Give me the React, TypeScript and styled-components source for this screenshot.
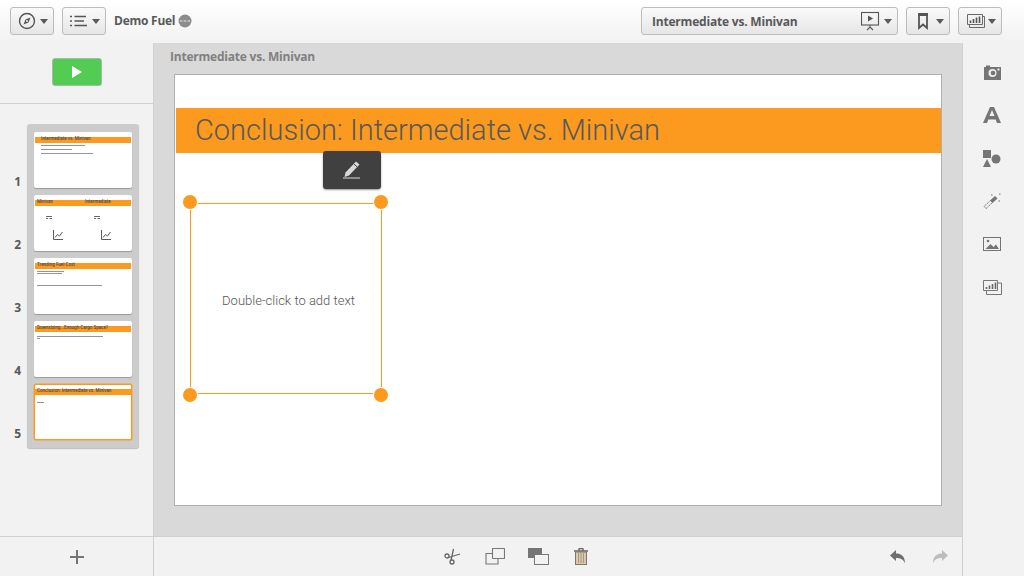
import React from "react";
import styled, { createGlobalStyle } from "styled-components";

const Global = createGlobalStyle`
  html, body { margin: 0; padding: 0; height: 100%; }
  body { font-family: Roboto, "Liberation Sans", sans-serif; color: #595959; overflow: hidden; }
`;
const Page = styled.div`width: 1024px; height: 576px; display: flex; flex-direction: column; background: #f2f2f2;`;
const TopBar = styled.header`
  height: 43px; flex: none; display: flex; align-items: flex-start; box-sizing: border-box; padding: 7px 22px 0 10px;
  background: linear-gradient(#ffffff, #f2f2f2);
`;
const ToolButton = styled.button<{ $w?: number; $ml?: number; $pl?: number }>`
  width: ${p => p.$w ?? 44}px; height: 28px; box-sizing: border-box; margin: 0 0 0 ${p => p.$ml ?? 0}px; padding: 0 5px 0 ${p => p.$pl ?? 7}px;
  display: flex; align-items: center; justify-content: space-between; flex: none;
  border: 1px solid #bcbcbc; border-radius: 3px; background: linear-gradient(#fafafa, #e6e6e6); color: #595959;
`;
const Caret = styled.span`width: 0; height: 0; border-left: 4px solid transparent; border-right: 4px solid transparent; border-top: 5px solid #595959; margin-top: 1px; flex: none;`;
const AppName = styled.div`margin-left: 8px; height: 27px; display: flex; align-items: center; gap: 3px; font: 700 12px "Open Sans", sans-serif; color: #595959; letter-spacing: -0.25px;`;
const Spacer = styled.div`flex: 1;`;
const SheetLabel = styled.span`font: 700 12px "Open Sans", sans-serif; color: #595959; letter-spacing: -0.2px;`;
const SheetRight = styled.span`display: flex; align-items: center; gap: 4px;`;
const Main = styled.div`flex: 1; display: flex; min-height: 0;`;
const LeftColumn = styled.aside`width: 154px; flex: none; display: flex; flex-direction: column; box-sizing: border-box; border-right: 1px solid #d0d0d0;`;
const PlayArea = styled.div`height: 61px; flex: none; box-sizing: border-box; border-bottom: 1px solid #d0d0d0; padding: 15px 0 0 52px;`;
const PlayButton = styled.button`
  width: 50px; height: 28px; margin: 0; padding: 0; border: 1px solid #a9b8a9; border-radius: 3px; background: #52cc52;
  display: flex; align-items: center; justify-content: center;
`;
const ThumbArea = styled.div`flex: 1; padding: 20px 0 0 0; display: flex; min-height: 0;`;
const Numbers = styled.div`width: 27px; flex: none; box-sizing: border-box; padding: 9px 6px 0 0; display: flex; flex-direction: column; gap: 7px;`;
const NumberCell = styled.div`height: 56px; display: flex; align-items: flex-end; justify-content: flex-end; font: 700 12px "Open Sans", sans-serif; color: #595959; line-height: 14px;`;
const Tray = styled.div`width: 112px; height: 324px; box-sizing: border-box; padding: 8px 7px; display: flex; flex-direction: column; gap: 7px; background: #cccccc; border-radius: 3px; box-shadow: 0 1px 1px #bbb;`;
const Thumb = styled.div<{ $active?: boolean }>`
  width: 98px; height: 56px; flex: none; box-sizing: border-box; position: relative; overflow: hidden; background: #fff; border-radius: 2px;
  box-shadow: 0 1px 1px #999; ${p => p.$active ? "border: 1px solid #fb9a1e; box-shadow: 0 0 0 .5px #fb9a1e;" : ""}
`;
const ThumbBanner = styled.div<{ $active?: boolean }>`
  position: absolute; left: 1px; right: 1px; top: 5px; height: 6px; background: #fb9a1e; ${p => p.$active ? "left: 0; right: 0; top: 4px;" : ""}
`;
const ThumbTitle = styled.span<{ $x: number; $top?: number }>`
  position: absolute; left: ${p => p.$x}px; top: ${p => p.$top ?? 3}px; font: 500 4.5px/7px Roboto, sans-serif; color: #4a4a4a; white-space: nowrap;
`;
const ThumbLine = styled.div<{ $x: number; $y: number; $w: number }>`
  position: absolute; left: ${p => p.$x}px; top: ${p => p.$y}px; width: ${p => p.$w}px; height: 1px; background: #98929e;
`;
const ThumbIcon = styled.svg<{ $x: number; $y: number }>`position: absolute; left: ${p => p.$x}px; top: ${p => p.$y}px;`;
const AddBar = styled.div`height: 40px; flex: none; box-sizing: border-box; border-top: 1px solid #d0d0d0; display: flex; align-items: center; justify-content: center; color: #757575;`;
const Center = styled.main`flex: 1; display: flex; flex-direction: column; min-width: 0;`;
const Stage = styled.div`flex: 1; background: #d9d9d9; box-sizing: border-box; padding: 0 20px 30px 20px; display: flex; flex-direction: column; min-height: 0;`;
const StageTitle = styled.div`height: 31px; flex: none; box-sizing: border-box; padding: 6px 0 0 0; margin-left: -4px; font: 700 12px/16px "Open Sans", sans-serif; color: #808080; letter-spacing: -0.22px;`;
const Slide = styled.div`flex: 1; position: relative; background: #fff; border: 1px solid #b0b0b0; box-sizing: border-box;`;
const Banner = styled.div`
  position: absolute; left: 1px; right: 0; top: 33px; height: 45px; background: #fb9a1e; box-sizing: border-box; padding-left: 19px;
  font: 300 29px/44px Roboto, sans-serif; color: #595959; white-space: nowrap;
`;
const EditButton = styled.button`
  position: absolute; left: 148px; top: 76px; width: 58px; height: 38px; padding: 0; border: 0; border-radius: 3px; background: #404040;
  box-shadow: 0 1px 2px rgba(0,0,0,.4); display: flex; align-items: center; justify-content: center;
`;
const TextFrame = styled.div`
  position: absolute; left: 15px; top: 128px; width: 192px; height: 191px; box-sizing: border-box; border: 1px solid #fb9a1e;
  display: flex; align-items: center; justify-content: center; font: 300 13px Roboto, sans-serif; color: #555; padding: 4px 0 0 5px;
`;
const Handle = styled.span<{ $h: string; $v: string }>`
  position: absolute; width: 14px; height: 14px; border-radius: 50%; background: #fb9a1e; box-shadow: 0 0 0 1px #fff; ${p => p.$h}; ${p => p.$v};
`;
const BottomBar = styled.footer`height: 40px; flex: none; box-sizing: border-box; border-top: 1px solid #d0d0d0; position: relative; display: flex; align-items: center; justify-content: center; gap: 21px; padding: 0 83px 0 0;`;
const BottomIcon = styled.span`width: 22px; height: 22px; display: flex; align-items: center; justify-content: center; `;
const UndoGroup = styled.div`position: absolute; right: 14px; top: 0; height: 39px; display: flex; align-items: center; gap: 26px;`;
const RightColumn = styled.aside`width: 62px; flex: none; box-sizing: border-box; border-left: 1px solid #d0d0d0; display: flex; flex-direction: column; align-items: center; padding: 18px 3px 0 0; gap: 21px;`;
const RailIcon = styled.span`width: 22px; height: 22px; display: flex; align-items: center; justify-content: center;`;

const thumbs = [
  { title: [["Intermediate vs. Minivan", 7]], lines: [[7, 13, 44], [7, 17, 31], [7, 21, 52]] },
  { title: [["Minivan", 3], ["Intermediate", 51]], lines: [] },
  { title: [["Trending Fuel Cost", 3]], lines: [[3, 13, 27], [3, 15, 25], [3, 27, 65]] },
  { title: [["Downsizing...Enough Cargo Space?", 3]], lines: [[3, 15, 66], [3, 17, 3]] },
  { title: [["Conclusion: Intermediate vs. Minivan", 2]], lines: [[2, 17, 7]], active: true },
] as { title: [string, number][]; lines: number[][]; active?: boolean }[];

const MiniChart = ({ x }: { x: number }) => (
  <ThumbIcon $x={x} $y={34} width="12" height="12" viewBox="0 0 12 12" fill="none" stroke="#5b5b5b" strokeWidth="1">
    <path d="M1.500 1v9.500H11" /><path d="M3 8.500l2.500-3 2 1.500L10.500 3" />
  </ThumbIcon>
);
const MiniTable = ({ x }: { x: number }) => (
  <ThumbIcon $x={x} $y={21} width="6" height="4" viewBox="0 0 6 4" fill="none" stroke="#6a6a6a" strokeWidth="1">
    <path d="M0 .5h6M0 2.500h2M3.500 2.500H6" />
  </ThumbIcon>
);

export default function App() {
  return (
    <Page>
      <Global />
      <TopBar>
        <ToolButton>
          <svg width="18" height="18" viewBox="0 0 18 18" fill="none" stroke="#555" strokeWidth="1.400">
            <circle cx="9" cy="9" r="7.500" /><path d="M12.500 5.500L10.500 10.500 5.500 12.500 7.500 7.500z" fill="#555" stroke="none" /><circle cx="9" cy="9" r="1" fill="#eee" stroke="none" />
          </svg>
          <Caret />
        </ToolButton>
        <ToolButton $ml={8}>
          <svg width="18" height="14" viewBox="0 0 18 14" fill="none" stroke="#555" strokeWidth="1.400">
            <path d="M0 2.500h2M4.500 2.500H16M0 7h2M4.500 7H14M0 11.500h2M4.500 11.500H17" />
          </svg>
          <Caret />
        </ToolButton>
        <AppName>
          Demo Fuel
          <svg width="14" height="14" viewBox="0 0 14 14"><circle cx="7" cy="7" r="6.500" fill="#8c8c8c" /><path d="M2 7h2.500M5.700 7h2.600M9.500 7H12" stroke="#e8e8e8" strokeWidth="1.200" /></svg>
        </AppName>
        <Spacer />
        <ToolButton $w={257} $pl={10}>
          <SheetLabel>Intermediate vs. Minivan</SheetLabel>
          <SheetRight>
            <svg width="19" height="20" viewBox="0 0 19 20" fill="none" stroke="#555" strokeWidth="1.100">
              <rect x=".5" y="1.500" width="17" height="12.500" /><path d="M7 4.500l5 3-5 3z" fill="#555" stroke="none" /><path d="M9 14v2M6 19l3-3 3 3" />
            </svg>
            <Caret />
          </SheetRight>
        </ToolButton>
        <ToolButton $ml={8} $pl={10}>
          <svg width="12" height="18" viewBox="0 0 12 18" fill="none" stroke="#555" strokeWidth="1.800">
            <path d="M2 2.500h8V16L6 12.500 2 16z" /><path d="M1 2.500h10" strokeWidth="3" />
          </svg>
          <Caret />
        </ToolButton>
        <ToolButton $ml={8} $pl={7}>
          <svg width="20" height="16" viewBox="0 0 20 16" fill="none" stroke="#6a6a6a" strokeWidth="1">
            <path d="M1.500 1.500h15v10h-15z" /><path d="M16.500 3.500h2v11h-15v-3" /><path d="M4.500 10V7.500M7.500 10V6M10.500 10V4.500M13.500 10V3.500" strokeWidth="1.600" stroke="#555" />
          </svg>
          <Caret />
        </ToolButton>
      </TopBar>
      <Main>
        <LeftColumn>
          <PlayArea>
            <PlayButton aria-label="Play">
              <svg width="10" height="12" viewBox="0 0 10 12"><path d="M0 0l10 6-10 6z" fill="#fff" /></svg>
            </PlayButton>
          </PlayArea>
          <ThumbArea>
            <Numbers>
              {thumbs.map((_, i) => <NumberCell key={i}>{i + 1}</NumberCell>)}
            </Numbers>
            <Tray>
              {thumbs.map((t, i) => (
                <Thumb key={i} $active={t.active}>
                  <ThumbBanner $active={t.active} />
                  {t.title.map(([s, x]) => <ThumbTitle key={s} $x={x} $top={t.active ? 2 : 3}>{s}</ThumbTitle>)}
                  {t.lines.map(([x, y, w], j) => <ThumbLine key={j} $x={x} $y={y} $w={w} />)}
                  {i === 1 && <><MiniTable x={12} /><MiniTable x={60} /><MiniChart x={18} /><MiniChart x={66} /></>}
                </Thumb>
              ))}
            </Tray>
          </ThumbArea>
          <AddBar>
            <svg width="16" height="16" viewBox="0 0 16 16" stroke="#757575" strokeWidth="2"><path d="M8 1v14M1 8h14" /></svg>
          </AddBar>
        </LeftColumn>
        <Center>
          <Stage>
            <StageTitle>Intermediate vs. Minivan</StageTitle>
            <Slide>
              <Banner>Conclusion: Intermediate vs. Minivan</Banner>
              <EditButton aria-label="Edit">
                <svg width="20" height="18" viewBox="0 0 20 18" fill="none">
                  <path d="M14 .5l3.500 3L7 14.500l-4.500 1.500 1-4.500z" fill="#d9d9d9" />
                  <path d="M12 3.200l3 2.600" stroke="#404040" strokeWidth="1" />
                  <path d="M1 17h17" stroke="#d9d9d9" strokeWidth="1" />
                </svg>
              </EditButton>
              <TextFrame>
                Double-click to add text
                <Handle $h="left: -8px" $v="top: -9px" />
                <Handle $h="right: -7px" $v="top: -9px" />
                <Handle $h="left: -8px" $v="bottom: -9px" />
                <Handle $h="right: -7px" $v="bottom: -9px" />
              </TextFrame>
            </Slide>
          </Stage>
          <BottomBar>
            <BottomIcon>
              <svg width="17" height="17" viewBox="0 0 17 17" fill="none" stroke="#666" strokeWidth="1.300">
                <circle cx="3" cy="8" r="2" /><circle cx="8" cy="14" r="2" /><path d="M4.500 9.500L16 6M7 12.500L9.500 1" />
              </svg>
            </BottomIcon>
            <BottomIcon>
              <svg width="20" height="17" viewBox="0 0 20 17" fill="none" stroke="#777" strokeWidth="1.100">
                <rect x="7.500" y=".5" width="12" height="10" rx=".5" /><path d="M7.500 5.500H1v10.500h12v-5.500" />
              </svg>
            </BottomIcon>
            <BottomIcon>
              <svg width="21" height="17" viewBox="0 0 21 17" fill="none">
                <rect x="0" y="0" width="14" height="10" fill="#757575" /><rect x="6.500" y="6.500" width="14" height="10" fill="#f2f2f2" stroke="#777" />
              </svg>
            </BottomIcon>
            <BottomIcon>
              <svg width="14" height="17" viewBox="0 0 14 17" fill="none">
                <path d="M0 3h14M4.500 2l1-1.500h3l1 1.500" stroke="#666" strokeWidth="1.500" />
                <rect x="1.500" y="4" width="11" height="12.500" fill="#e0c79f" stroke="#777" />
                <path d="M4.500 5v10M7 5v10M9.500 5v10" stroke="#9a9a9a" />
              </svg>
            </BottomIcon>
            <UndoGroup>
              <svg width="16" height="14" viewBox="0 0 16 14"><path d="M0 5.500L6 0v3.500c5 0 9 2.500 9 10-1.500-4-4-5.500-9-5.500v3z" fill="#6e6e6e" /></svg>
              <svg width="16" height="14" viewBox="0 0 16 14"><path d="M16 5.500L10 0v3.500c-5 0-9 2.500-9 10 1.500-4 4-5.500 9-5.500v3z" fill="#bdbdbd" /></svg>
            </UndoGroup>
          </BottomBar>
        </Center>
        <RightColumn>
          <RailIcon>
            <svg width="19" height="15" viewBox="0 0 19 15"><path d="M1 2h2V.5h4V2h11v13H1z" fill="#757575" /><circle cx="9.500" cy="8" r="4" fill="#eee" /><circle cx="10" cy="8" r="2.300" fill="#757575" /><rect x="14.500" y="3.500" width="2" height="2" fill="#eee" /></svg>
          </RailIcon>
          <RailIcon>
            <svg width="18" height="18" viewBox="0 0 18 18"><path d="M7 1h4l7 16h-4l-1.300-3.500H5.300L4 17H0zM6.500 10h5L9 4z" fill="#757575" fillRule="evenodd" /></svg>
          </RailIcon>
          <RailIcon>
            <svg width="18" height="17" viewBox="0 0 18 17" fill="#757575"><rect x="0" y="0" width="8" height="8" /><circle cx="13" cy="9" r="4.500" /><path d="M4 9l4 8H0z" /></svg>
          </RailIcon>
          <RailIcon>
            <svg width="18" height="16" viewBox="0 0 18 16" fill="none">
              <path d="M3 15.500L1 13.500 7.500 7.500 9.500 9.500z" fill="#f2f2f2" stroke="#757575" strokeDasharray="1.500 .7" />
              <path d="M7 7.500L12 3l2.500 2.500L9.500 10z" fill="#757575" />
              <path d="M8 2h1.500M15.500 8h1.500M16 1h1.500" stroke="#757575" />
            </svg>
          </RailIcon>
          <RailIcon>
            <svg width="18" height="14" viewBox="0 0 18 14" fill="none"><rect x=".5" y=".5" width="17" height="13" stroke="#757575" /><path d="M2.500 12l5-5 3 3 2.500-2.500 3 4.500z" fill="#757575" /><circle cx="5" cy="4" r="1.300" fill="#757575" /></svg>
          </RailIcon>
          <RailIcon>
            <svg width="19" height="15" viewBox="0 0 19 15" fill="none" stroke="#777" strokeWidth="1"><path d="M.5.5h14v10H.5z" /><path d="M15 3h3.500v11.500h-15V11" /><path d="M3.500 9V7M6.500 9V5.500M9.500 9V4M12.500 9V2.500" strokeWidth="1.600" stroke="#666" /></svg>
          </RailIcon>
        </RightColumn>
      </Main>
    </Page>
  );
}
